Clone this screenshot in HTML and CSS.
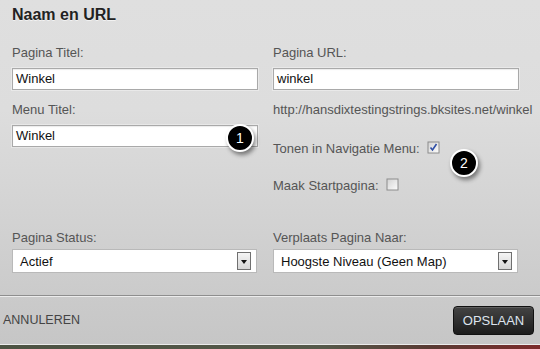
FILE: index.html
```html
<!DOCTYPE html>
<html lang="nl">
<head>
  <meta charset="UTF-8">
  <title>Naam en URL</title>
  <link rel="stylesheet" href="styles.css">
</head>
<body>
  <div class="dialog">
    <div class="dialog-head">Naam en URL</div>

    <div class="fields">
      <div class="col">
        <label class="lbl">Pagina Titel:</label>
        <div class="input">Winkel</div>
        <label class="lbl lbl-next">Menu Titel:</label>
        <div class="input">Winkel</div>
      </div>

      <div class="col">
        <label class="lbl">Pagina URL:</label>
        <div class="input">winkel</div>
        <div class="url">http://hansdixtestingstrings.bksites.net/winkel</div>
        <div class="check-row check-first">
          <span>Tonen in Navigatie Menu:</span>
          <svg class="check" width="13" height="13" viewBox="0 0 13 13">
            <defs>
              <linearGradient id="cb" x1="0" y1="0" x2="1" y2="1">
                <stop offset="0" stop-color="#d4d4d4"/>
                <stop offset="1" stop-color="#fbfbfb"/>
              </linearGradient>
            </defs>
            <rect x="0.5" y="0.5" width="12" height="12" fill="#8c8c8c"/>
            <rect x="1.5" y="1.5" width="10" height="10" fill="url(#cb)"/>
            <path d="M3.5 6.5 L5.5 9 L9.5 3" fill="none" stroke="#2e4ea6" stroke-width="1.6"/>
          </svg>
        </div>
        <div class="check-row check-second">
          <span>Maak Startpagina:</span>
          <svg class="check" width="13" height="13" viewBox="0 0 13 13">
            <rect x="0.5" y="0.5" width="12" height="12" fill="#8c8c8c"/>
            <rect x="1.5" y="1.5" width="10" height="10" fill="url(#cb)"/>
          </svg>
        </div>
      </div>

      <div class="col">
        <label class="lbl">Pagina Status:</label>
        <div class="select">
          <span>Actief</span>
          <span class="arrow"></span>
        </div>
      </div>

      <div class="col">
        <label class="lbl">Verplaats Pagina Naar:</label>
        <div class="select">
          <span>Hoogste Niveau (Geen Map)</span>
          <span class="arrow"></span>
        </div>
      </div>
    </div>

    <div class="dialog-foot">
      <span class="cancel">ANNULEREN</span>
      <button class="save">OPSLAAN</button>
    </div>

    <!-- genummerde markeringen -->
    <div class="badge badge-one">1</div>
    <div class="badge badge-two">2</div>
  </div>
</body>
</html>
```

FILE: styles.css
```css
body {
  margin: 0;
  height: 349px;
  overflow: hidden;
  font-family: "Liberation Sans", Arial, sans-serif;
  background: linear-gradient(90deg, #4d5343 0%, #56594a 60%, #5a3a33 80%, #7c2b2b 100%);
}

.dialog {
  position: relative;
  width: 540px;
  height: 344px;
  border-bottom: 1px solid #ececec;
  background: linear-gradient(#dfdfdf 0, #dddddd 110px, #c6c6c6 100%);
  display: flex;
  flex-direction: column;
}

.dialog-head {
  padding: 5px 12px 0;
  height: 20px;
  line-height: 20px;
  font-size: 16px;
  font-weight: bold;
  color: #222;
  text-shadow: 0 1px 0 rgba(255, 255, 255, 0.6);
}

.fields {
  display: grid;
  grid-template-columns: 246px 246px;
  column-gap: 15px;
  row-gap: 37px;
  padding: 20px 0 0 12px;
}

.col {
  display: flex;
  flex-direction: column;
  align-items: flex-start;
}

.lbl {
  font-size: 13px;
  line-height: 15px;
  color: #555;
}

.lbl-next {
  margin-top: 12px;
}

.input {
  box-sizing: border-box;
  width: 100%;
  height: 22px;
  margin-top: 8px;
  padding: 0 3px;
  background: #fff;
  border: 1px solid #a9a9a9;
  box-shadow: inset 0 1px 1px rgba(0, 0, 0, 0.08), 0 0 0 1px rgba(255, 255, 255, 0.35);
  font-size: 13px;
  line-height: 20px;
  color: #111;
}

.url {
  margin-top: 12px;
  font-size: 13px;
  line-height: 15px;
  color: #555;
}

.check-row {
  display: flex;
  align-items: center;
  gap: 7px;
  font-size: 13px;
  line-height: 15px;
  color: #555;
}

.check-first {
  margin-top: 24px;
}

.check-second {
  margin-top: 22px;
}

.check {
  display: block;
  margin-top: -2px;
}

.select {
  box-sizing: border-box;
  width: 245px;
  height: 24px;
  margin-top: 4px;
  padding: 0 5px 0 7px;
  background: #fff;
  border: 1px solid #b9b9b9;
  display: flex;
  align-items: center;
  justify-content: space-between;
  font-size: 13px;
  color: #111;
}

.arrow {
  position: relative;
  box-sizing: border-box;
  width: 14px;
  height: 18px;
  border: 1px solid #707070;
  background: linear-gradient(#f4f4f4, #d6d6d6);
}

.arrow::after {
  content: '';
  position: absolute;
  left: 3px;
  top: 7px;
  border-left: 3px solid transparent;
  border-right: 3px solid transparent;
  border-top: 4px solid #111;
}

.dialog-foot {
  margin-top: 22px;
  border-top: 1px solid #8e8e8e;
  box-shadow: inset 0 1px 0 #ececec;
  padding: 10px 6px 0 3px;
  display: flex;
  justify-content: space-between;
  align-items: center;
}

.cancel {
  font-size: 12.5px;
  line-height: 15px;
  color: #444;
}

.save {
  width: 81px;
  height: 29px;
  padding: 0;
  border: 1px solid #111;
  border-radius: 4px;
  background: linear-gradient(#444, #1c1c1c);
  box-shadow: inset 0 1px 0 rgba(255, 255, 255, 0.15);
  font-family: inherit;
  font-size: 13px;
  color: #dde4ee;
}

.badge {
  position: absolute;
  box-sizing: border-box;
  width: 28px;
  height: 28px;
  border: 2px solid #fff;
  border-radius: 50%;
  background: #000;
  box-shadow: 2px 3px 4px rgba(0, 0, 0, 0.45);
  color: #fff;
  font-size: 14px;
  line-height: 24px;
  text-align: center;
}

.badge-one {
  left: 226px;
  top: 124px;
}

.badge-two {
  left: 450px;
  top: 149px;
}
```
